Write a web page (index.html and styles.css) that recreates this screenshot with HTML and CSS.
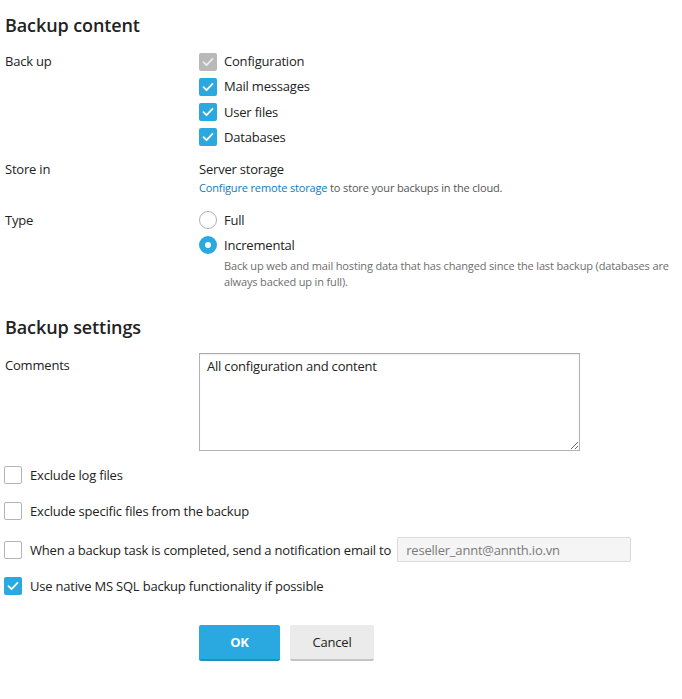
FILE: index.html
```html
<!DOCTYPE html>
<html lang="en">
<head>
<meta charset="utf-8">
<title>Backup</title>
<link rel="stylesheet" href="styles.css">
</head>
<body>
<div class="page">
  <h2 class="section-title">Backup content</h2>

  <div class="row row-backup">
    <div class="label">Back up</div>
    <div class="field">
      <div class="opt"><span class="cb cb-disabled"><svg viewBox="0 0 18 18"><path d="M4.5 9.2l3 3 6-6.4" /></svg></span><span>Configuration</span></div>
      <div class="opt"><span class="cb cb-on"><svg viewBox="0 0 18 18"><path d="M4.5 9.2l3 3 6-6.4" /></svg></span><span>Mail messages</span></div>
      <div class="opt"><span class="cb cb-on"><svg viewBox="0 0 18 18"><path d="M4.5 9.2l3 3 6-6.4" /></svg></span><span>User files</span></div>
      <div class="opt"><span class="cb cb-on"><svg viewBox="0 0 18 18"><path d="M4.5 9.2l3 3 6-6.4" /></svg></span><span>Databases</span></div>
    </div>
  </div>

  <div class="row row-store">
    <div class="label label-22">Store in</div>
    <div class="field">
      <div class="value">Server storage</div>
      <div class="hint"><a href="#" class="link">Configure remote storage</a> to store your backups in the cloud.</div>
    </div>
  </div>

  <div class="row row-type">
    <div class="label">Type</div>
    <div class="field">
      <div class="opt"><span class="rb"></span><span>Full</span></div>
      <div class="opt"><span class="rb rb-on"></span><span>Incremental</span></div>
      <div class="desc">Back up web and mail hosting data that has changed since the last backup (databases are always backed up in full).</div>
    </div>
  </div>

  <h2 class="section-title settings-title">Backup settings</h2>

  <div class="row row-comments">
    <div class="label label-24">Comments</div>
    <div class="field">
      <textarea class="textarea">All configuration and content</textarea>
    </div>
  </div>

  <div class="check-row cr1"><span class="cb cb-off"></span><span>Exclude log files</span></div>
  <div class="check-row cr2"><span class="cb cb-off"></span><span>Exclude specific files from the backup</span></div>
  <div class="check-row cr3"><span class="cb cb-off"></span><span>When a backup task is completed, send a notification email to</span><input class="email" type="text" value="reseller_annt@annth.io.vn"></div>
  <div class="check-row cr4"><span class="cb cb-on"><svg viewBox="0 0 18 18"><path d="M4.5 9.2l3 3 6-6.4" /></svg></span><span>Use native MS SQL backup functionality if possible</span></div>

  <div class="buttons">
    <button class="btn btn-ok" type="button">OK</button>
    <button class="btn btn-cancel" type="button">Cancel</button>
  </div>
</div>
</body>
</html>
```
FILE: styles.css
```css
* { box-sizing: border-box; }
html, body { margin: 0; padding: 0; background: #fff; }
body {
  font-family: "Open Sans", "DejaVu Sans", sans-serif;
  font-size: 13px;
  letter-spacing: -0.2px;
  color: #222;
}
.page {
  padding: 13px 5px 0 5px;
  width: 682px;
}
.section-title {
  margin: 0;
  font-size: 18px;
  line-height: 24px;
  font-weight: 600;
  letter-spacing: -0.1px;
  color: #222;
}
.settings-title { margin-top: 25px; }

.row { display: flex; }
.label { width: 194px; flex: none; line-height: 25px; }
.label-22 { line-height: 22px; }
.label-24 { line-height: 24px; }
.field { flex: 1; min-width: 0; }

.row-backup { margin-top: 12px; }
.row-store { margin-top: 8px; }
.row-type { margin-top: 12px; }
.row-comments { margin-top: 14px; }

.opt {
  display: flex;
  align-items: center;
  height: 25px;
  gap: 7px;
  padding-bottom: 1px;
}
.row-backup .opt + .opt { margin-top: 0.3px; }
.opt .cb, .opt .rb { margin-top: 1px; }
.cb {
  width: 18px;
  height: 18px;
  flex: none;
  border-radius: 2px;
  display: inline-flex;
  align-items: center;
  justify-content: center;
}
.cb svg { width: 18px; height: 18px; }
.cb path { fill: none; stroke: #fff; stroke-width: 1.8; stroke-linecap: round; stroke-linejoin: round; }
.cb-on { background: #29a9df; }
.cb-disabled { background: #b9b9b9; }
.cb-disabled path { stroke: #ececec; }
.cb-off { background: #fff; border: 1px solid #b4b4b4; }

.rb {
  width: 18px;
  height: 18px;
  flex: none;
  border-radius: 50%;
  border: 1px solid #b0b0b0;
  background: #fff;
}
.rb-on {
  border: 6px solid #29a9df;
  background: #fff;
}

.value { line-height: 22px; }
.hint { font-size: 11px; line-height: 16px; color: #555; letter-spacing: -0.15px; }
.link { color: #0d7cbd; text-decoration: none; }
.desc {
  font-size: 11px;
  line-height: 16px;
  color: #6e6e6e;
  padding-left: 25px;
  letter-spacing: -0.15px;
}

.textarea {
  display: block;
  width: 381px;
  height: 98px;
  border: 1px solid #b3b3b3;
  border-top-color: #a8a8a8;
  border-radius: 0;
  padding: 3px 7px;
  font-family: "Open Sans", "DejaVu Sans", sans-serif;
  font-size: 13px;
  letter-spacing: -0.2px;
  line-height: 18px;
  color: #222;
  resize: vertical;
  box-shadow: inset 0 1px 2px rgba(0,0,0,0.06);
}

.check-row {
  display: flex;
  align-items: center;
  height: 25px;
  padding-bottom: 1px;
}
.check-row .cb { margin-right: 8px; margin-left: -1px; margin-top: 1px; }
.cr1 { margin-top: 12px; }
.cr2 { margin-top: 11px; }
.cr3 { margin-top: 14px; }
.cr4 { margin-top: 11px; }

.email {
  margin-left: 6px;
  width: 234px;
  height: 25px;
  border: 1px solid #dcdcdc;
  background: #f5f5f5;
  padding: 0 8px;
  font-family: "Open Sans", "DejaVu Sans", sans-serif;
  font-size: 13px;
  letter-spacing: -0.2px;
  color: #7a7a7a;
  border-radius: 1px;
}

.buttons {
  display: flex;
  gap: 10px;
  margin-top: 26px;
  padding-left: 194px;
}
.btn {
  height: 36px;
  border: none;
  border-radius: 2px;
  font-family: "Open Sans", "DejaVu Sans", sans-serif;
  font-size: 13px;
  letter-spacing: -0.2px;
  cursor: pointer;
  padding: 0;
}
.btn-ok {
  width: 81px;
  background: #29a9df;
  border-bottom: 2px solid #2290c0;
  color: #fff;
  font-weight: 700;
}
.btn-cancel {
  width: 84px;
  background: #ebebeb;
  border-bottom: 2px solid #c4c4c4;
  color: #222;
  font-weight: 400;
}
```
